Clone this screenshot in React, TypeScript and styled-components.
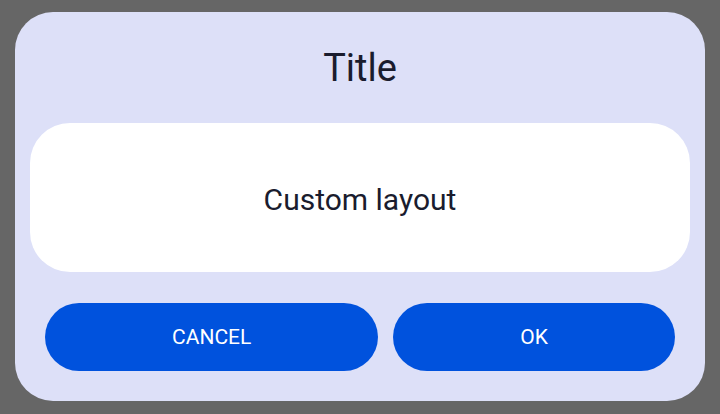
import React from "react";
import styled, { createGlobalStyle } from "styled-components";

const Global = createGlobalStyle`
  html, body { margin: 0; padding: 0; background: #666666; }
  body { font-family: Roboto, "Noto Sans", sans-serif; }
  #root { width: 720px; height: 414px; display: flex; }
`;

const Dialog = styled.div`
  box-sizing: border-box;
  margin: 12px 15px 13px 15px;
  flex: 1;
  background: #dde0f8;
  border-radius: 38px;
  display: flex;
  flex-direction: column;
  padding: 0 15px 30px 15px;
`;

const Title = styled.h1`
  margin: 0;
  height: 111px;
  display: flex;
  align-items: center;
  justify-content: center;
  font-size: 38px;
  font-weight: 400;
  color: #1a1c2e;
`;

const Card = styled.div`
  box-sizing: border-box;
  height: 149px;
  padding-top: 3px;
  background: #ffffff;
  border-radius: 40px;
  display: flex;
  align-items: center;
  justify-content: center;
  font-size: 30px;
  color: #1a1c2e;
`;

const Actions = styled.div`
  margin-top: 31px;
  padding: 0 15px;
  display: flex;
  gap: 15px;
`;

const Button = styled.button`
  flex: 1 1 auto;
  height: 68px;
  border: none;
  border-radius: 34px;
  background: #0052dd;
  color: #ffffff;
  font-family: Roboto, "Noto Sans", sans-serif;
  font-size: 21px;
  padding: 0;
`;

export default function App() {
  return (
    <>
      <Global />
      <Dialog>
        <Title>Title</Title>
        <Card>Custom layout</Card>
        <Actions>
          <Button>CANCEL</Button>
          <Button>OK</Button>
        </Actions>
      </Dialog>
    </>
  );
}
